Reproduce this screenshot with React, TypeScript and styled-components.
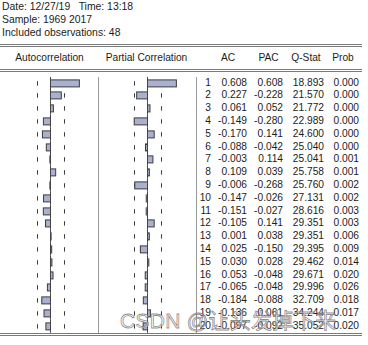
import React from "react";
import styled, { createGlobalStyle } from "styled-components";

const GlobalStyle = createGlobalStyle`
  html, body { margin: 0; padding: 0; background: #ffffff; }
  body { font-family: "Liberation Sans", Arial, sans-serif; color: #1c1c1c; }
`;

type Row = { k: number; ac: number; pac: number; q: string; p: string };

const rows: Row[] = [
  { k: 1, ac: 0.608, pac: 0.608, q: "18.893", p: "0.000" },
  { k: 2, ac: 0.227, pac: -0.228, q: "21.570", p: "0.000" },
  { k: 3, ac: 0.061, pac: 0.052, q: "21.772", p: "0.000" },
  { k: 4, ac: -0.149, pac: -0.28, q: "22.989", p: "0.000" },
  { k: 5, ac: -0.17, pac: 0.141, q: "24.600", p: "0.000" },
  { k: 6, ac: -0.088, pac: -0.042, q: "25.040", p: "0.000" },
  { k: 7, ac: -0.003, pac: 0.114, q: "25.041", p: "0.001" },
  { k: 8, ac: 0.109, pac: 0.039, q: "25.758", p: "0.001" },
  { k: 9, ac: -0.006, pac: -0.268, q: "25.760", p: "0.002" },
  { k: 10, ac: -0.147, pac: -0.026, q: "27.131", p: "0.002" },
  { k: 11, ac: -0.151, pac: -0.027, q: "28.616", p: "0.003" },
  { k: 12, ac: -0.105, pac: 0.141, q: "29.351", p: "0.003" },
  { k: 13, ac: 0.001, pac: 0.038, q: "29.351", p: "0.006" },
  { k: 14, ac: 0.025, pac: -0.15, q: "29.395", p: "0.009" },
  { k: 15, ac: 0.03, pac: 0.028, q: "29.462", p: "0.014" },
  { k: 16, ac: 0.053, pac: -0.048, q: "29.671", p: "0.020" },
  { k: 17, ac: -0.065, pac: -0.048, q: "29.996", p: "0.026" },
  { k: 18, ac: -0.184, pac: -0.088, q: "32.709", p: "0.018" },
  { k: 19, ac: -0.136, pac: 0.061, q: "34.244", p: "0.017" },
  { k: 20, ac: -0.097, pac: -0.092, q: "35.052", p: "0.020" },
];

const ROW_H = 12.8;
const SCALE = 47.5;
const BOUND = 13.6;

const Page = styled.div`
  position: relative;
  width: 368px;
  height: 345px;
  overflow: hidden;
`;

const Info = styled.div`
  padding: 1px 0 0 2px;
  font-size: 10.4px;
  line-height: 12.8px;
`;

const DoubleRule = styled.div<{ $top?: number }>`
  width: 362px;
  height: 1px;
  margin-top: ${(p) => p.$top ?? 0}px;
  border-top: 1px solid #7a7a7a;
  border-bottom: 1px solid #7a7a7a;
`;

const Columns = `
  display: grid;
  grid-template-columns: 99px 98px 14px 36px 36px 41px 35px;
`;

const HeaderRow = styled.div`
  ${Columns}
  height: 22px;
  align-items: center;
  font-size: 10.2px;
`;

const HeadCell = styled.div<{ $nudge?: number }>`
  text-align: center;
  white-space: nowrap;
  padding-left: ${(p) => Math.max(0, p.$nudge ?? 0)}px;
  padding-right: ${(p) => Math.max(0, -(p.$nudge ?? 0))}px;
`;

const Body = styled.div`
  padding-top: 4.6px;
`;

const DataRow = styled.div`
  ${Columns}
  height: ${ROW_H}px;
  font-size: 10.2px;
  line-height: ${ROW_H}px;
`;

const ChartCell = styled.div<{ $sep?: boolean }>`
  height: ${ROW_H}px;
  border-right: ${(p) => (p.$sep ? "1px solid #9a9a9a" : "none")};
  svg { display: block; }
`;

const Num = styled.div`
  text-align: right;
  white-space: nowrap;
`;

const Watermark = styled.div`
  position: absolute;
  left: 120px;
  top: 310px;
  font-size: 21px;
  line-height: 21px;
  white-space: nowrap;
  font-family: "Liberation Sans", "Noto Sans CJK SC", sans-serif;
  color: rgba(255, 255, 255, 0.55);
  -webkit-text-stroke: 0.8px rgba(105, 105, 105, 0.75);
  letter-spacing: 0.3px;
`;

function Bars({ value, axis }: { value: number; axis: number }) {
  const w = Math.max(Math.abs(value) * SCALE, 0.6);
  const x = value >= 0 ? axis : axis - w;
  const lo = Math.round(axis - BOUND) + 0.5;
  const hi = Math.round(axis + BOUND) + 0.5;
  return (
    <svg width={98} height={ROW_H} viewBox={`0 0 98 ${ROW_H}`}>
      <line x1={lo} x2={lo} y1={4.2} y2={8.6} stroke="#3a3a3a" strokeWidth={1} />
      <line x1={hi} x2={hi} y1={4.2} y2={8.6} stroke="#3a3a3a" strokeWidth={1} />
      <rect x={x} y={2.9} width={w} height={7} fill="#a9b0d0" stroke="#3c3c3c" strokeWidth={1} />
      <line x1={axis} x2={axis} y1={0} y2={ROW_H} stroke="#444" strokeWidth={1} />
    </svg>
  );
}

export default function App() {
  return (
    <Page>
      <GlobalStyle />
      <Info>
        <div>Date: 12/27/19&nbsp;&nbsp; Time: 13:18</div>
        <div>Sample: 1969 2017</div>
        <div>Included observations: 48</div>
      </Info>
      <DoubleRule $top={4.6} />
      <HeaderRow>
        <HeadCell>Autocorrelation</HeadCell>
        <HeadCell $nudge={-3}>Partial Correlation</HeadCell>
        <HeadCell />
        <HeadCell $nudge={-2}>AC</HeadCell>
        <HeadCell $nudge={7}>PAC</HeadCell>
        <HeadCell $nudge={5}>Q-Stat</HeadCell>
        <HeadCell $nudge={3}>Prob</HeadCell>
      </HeaderRow>
      <DoubleRule />
      <Body>
        {rows.map((r) => (
          <DataRow key={r.k}>
            <ChartCell $sep>
              <Bars value={r.ac} axis={50.5} />
            </ChartCell>
            <ChartCell $sep>
              <Bars value={r.pac} axis={48.5} />
            </ChartCell>
            <Num>{r.k}</Num>
            <Num>{r.ac.toFixed(3)}</Num>
            <Num>{r.pac.toFixed(3)}</Num>
            <Num>{r.q}</Num>
            <Num>{r.p}</Num>
          </DataRow>
        ))}
      </Body>
      <DoubleRule />
      <Watermark>CSDN @让头发掉下来</Watermark>
    </Page>
  );
}
